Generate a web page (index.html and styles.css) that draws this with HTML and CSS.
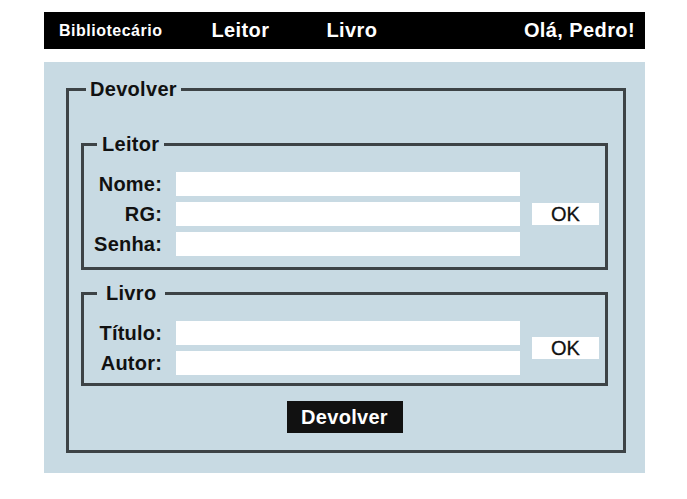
FILE: index.html
```html
<!DOCTYPE html>
<html lang="pt">
<head>
<meta charset="utf-8">
<title>Devolver</title>
<link rel="stylesheet" href="styles.css">
</head>
<body>
<div class="page">
  <header class="topbar">
    <span class="brand">Bibliotecário</span>
    <a class="nav-link nav-leitor" href="#">Leitor</a>
    <a class="nav-link nav-livro" href="#">Livro</a>
    <span class="greeting">Olá, Pedro!</span>
  </header>
  <main class="panel">
    <form class="form">
      <fieldset class="outer">
        <legend class="outer-legend">Devolver</legend>
        <fieldset class="group group-leitor">
          <legend class="group-legend legend-leitor">Leitor</legend>
          <div class="rows rows-3">
            <label class="lbl" for="nome">Nome:</label>
            <input class="field" id="nome" type="text">
            <label class="lbl" for="rg">RG:</label>
            <input class="field" id="rg" type="text">
            <label class="lbl" for="senha">Senha:</label>
            <input class="field" id="senha" type="password">
            <button class="ok" type="button">OK</button>
          </div>
        </fieldset>
        <fieldset class="group group-livro">
          <legend class="group-legend legend-livro">Livro</legend>
          <div class="rows rows-2">
            <label class="lbl" for="titulo">Título:</label>
            <input class="field" id="titulo" type="text">
            <label class="lbl" for="autor">Autor:</label>
            <input class="field" id="autor" type="text">
            <button class="ok" type="button">OK</button>
          </div>
        </fieldset>
        <button class="submit" type="button">Devolver</button>
      </fieldset>
    </form>
  </main>
</div>
</body>
</html>
```
FILE: styles.css
```css
* { box-sizing: border-box; }
html, body { margin: 0; background: #fff; }
body {
  font-family: "Liberation Sans", Arial, sans-serif;
  color: #111;
}
.page {
  width: 645px;
  padding: 12px 0 0 44px;
}
.topbar {
  display: flex;
  align-items: center;
  height: 37px;
  background: #000;
  color: #fff;
  font-weight: bold;
  padding: 0 10px 0 15px;
  letter-spacing: 0.4px;
}
.brand { font-size: 16px; letter-spacing: 0.5px; }
.nav-link {
  color: #fff;
  text-decoration: none;
  font-size: 20px;
}
.nav-leitor { margin-left: 49px; }
.nav-livro { margin-left: 57px; }
.greeting { margin-left: auto; font-size: 20px; }

.panel {
  margin-top: 13px;
  background: #c8dae3;
  padding: 16px 19px 20px 22px;
}
.form { margin: 0; }
.outer {
  margin: 0;
  border: 3px solid #3d4346;
  padding: 32px 15px 17px 12px;
  min-width: 0;
}
.outer-legend,
.group-legend {
  font-size: 20px;
  font-weight: bold;
  line-height: 23px;
  letter-spacing: 0.3px;
}
.outer-legend { padding: 0 4px; margin-left: 5px; }
.group {
  margin: 0;
  border: 3px solid #3d4346;
  min-width: 0;
}
.group-leitor { padding: 16px 3px 11px 0; }
.group-livro { padding: 16px 3px 8px 0; margin-top: 12px; }
.legend-leitor { padding: 0 5px; margin-left: 13px; }
.legend-livro { padding: 0 9px; margin-left: 13px; }

.rows {
  display: grid;
  grid-template-columns: 92px 344px 1fr;
  row-gap: 6px;
  align-items: center;
}
.rows-3 { grid-template-rows: repeat(3, 24px); }
.rows-2 { grid-template-rows: repeat(2, 24px); }
.lbl {
  grid-column: 1;
  text-align: right;
  padding-right: 14px;
  font-size: 20px;
  font-weight: bold;
  line-height: 24px;
  letter-spacing: 0.2px;
}
.field {
  grid-column: 2;
  display: block;
  width: 100%;
  height: 24px;
  border: none;
  padding: 0 4px;
  background: #fff;
  font: 16px "Liberation Sans", Arial, sans-serif;
  outline: none;
}
.ok {
  grid-column: 3;
  grid-row: 1 / -1;
  align-self: center;
  margin-left: 12px;
  width: 67px;
  height: 22px;
  border: none;
  padding: 0;
  background: #fff;
  color: #111;
  font: 20px/22px "Liberation Sans", Arial, sans-serif;
  -webkit-text-stroke: 0.3px #111;
  text-align: center;
}
.submit {
  display: block;
  margin: 15px auto 0;
  width: 116px;
  height: 32px;
  border: none;
  padding: 0;
  background: #111;
  color: #fff;
  font: bold 20px/32px "Liberation Sans", Arial, sans-serif;
  letter-spacing: 0.3px;
}
```
